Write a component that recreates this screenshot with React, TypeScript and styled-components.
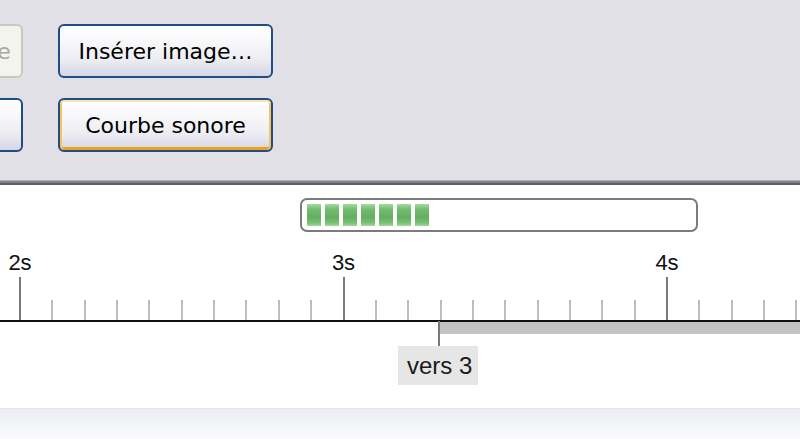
import React from "react";
import styled, { createGlobalStyle, css } from "styled-components";

const Global = createGlobalStyle`
  html, body { margin: 0; padding: 0; background: #ffffff; overflow: hidden; }
  #root { width: 800px; height: 439px; }
`;

const Page = styled.div`
  width: 800px;
  height: 439px;
  display: flex;
  flex-direction: column;
  overflow: hidden;
  background: #ffffff;
`;

const Toolbar = styled.div`
  height: 180px;
  flex: none;
  background: #e0e0e6;
  box-sizing: border-box;
  padding-top: 24px;
  overflow: hidden;
`;

const ButtonGrid = styled.div`
  display: grid;
  grid-template-columns: 215px 215px;
  grid-auto-rows: 54px;
  column-gap: 35px;
  row-gap: 20px;
  margin-left: -192px;
`;

type Variant = "disabled" | "normal" | "hot";

const Button = styled.button<{ $variant: Variant }>`
  box-sizing: border-box;
  height: 54px;
  width: 215px;
  margin: 0;
  padding: 0 4px;
  border-radius: 6px;
  font-family: "DejaVu Sans", Verdana, sans-serif;
  font-size: 22px;
  white-space: nowrap;
  overflow: hidden;
  text-align: center;
  ${(p) =>
    p.$variant === "disabled"
      ? css`
          border: 2px solid #cbc9bd;
          background: #f4f4ef;
          color: #aca899;
        `
      : css`
          border: 2px solid #1e4e84;
          color: #000000;
          background: linear-gradient(
            180deg,
            #ffffff 0%,
            #f7f7fa 35%,
            #ebebf2 70%,
            #d6d5e5 100%
          );
        `}
  ${(p) =>
    p.$variant === "hot" &&
    css`
      box-shadow: inset 0 2px 0 #fde6ad, inset 2px 0 0 #f8c35a,
        inset -2px 0 0 #f8c35a, inset 0 -3px 0 #eea11c;
    `}
`;

const Separator = styled.div`
  height: 5px;
  flex: none;
  background: linear-gradient(
    180deg,
    #b4b4b8 0px,
    #b4b4b8 1px,
    #828284 1px,
    #828284 3px,
    #5f5f60 3px,
    #5f5f60 5px
  );
`;

const Timeline = styled.div`
  flex: none;
  height: 223px;
  display: flex;
  flex-direction: column;
`;

const Progress = styled.div`
  box-sizing: border-box;
  margin: 13px 0 0 300px;
  width: 398px;
  height: 34px;
  border: 2px solid #7b7b7b;
  border-radius: 7px;
  background: #ffffff;
  padding: 4px 5px;
  display: flex;
  gap: 4px;
`;

const Block = styled.div`
  width: 14px;
  height: 22px;
  background: linear-gradient(
    180deg,
    #a6d9a2 0%,
    #73bb6f 25%,
    #62b05e 60%,
    #79bf74 85%,
    #a2d69e 100%
  );
`;

const Ruler = styled.div`
  position: relative;
  height: 176px;
`;

const RulerSvg = styled.svg`
  display: block;
  width: 800px;
  height: 176px;
`;

const TimeLabel = styled.span`
  position: absolute;
  top: 18px;
  transform: translateX(-50%);
  font-family: "Liberation Sans", Arial, sans-serif;
  font-size: 22px;
  line-height: 26px;
  color: #111111;
`;

const Tag = styled.div`
  position: absolute;
  left: 398px;
  top: 114px;
  width: 80px;
  height: 39px;
  box-sizing: border-box;
  padding-left: 9px;
  background: #e6e6e6;
  display: flex;
  align-items: center;
  font-family: "Liberation Sans", Arial, sans-serif;
  font-size: 24px;
  color: #1a1a1a;
`;

const BottomBand = styled.div`
  flex: 1;
  border-top: 1px solid #e2e5ee;
  background: linear-gradient(180deg, #eaedf3 0%, #f5f6f9 60%, #fafafc 100%);
`;

const SECOND = 323.5;
const ORIGIN = 20;

const ticks = Array.from({ length: 26 }, (_, i) => ({
  x: ORIGIN + (SECOND / 10) * i,
  major: i % 10 === 0,
}));

const labels = [
  { x: ORIGIN, text: "2s" },
  { x: ORIGIN + SECOND, text: "3s" },
  { x: ORIGIN + SECOND * 2, text: "4s" },
];

export default function App() {
  return (
    <Page>
      <Global />
      <Toolbar>
        <ButtonGrid>
          <Button $variant="disabled" disabled>
            Supprimer image
          </Button>
          <Button $variant="normal">Insérer image…</Button>
          <Button $variant="normal">Insérer texte</Button>
          <Button $variant="hot">Courbe sonore</Button>
        </ButtonGrid>
      </Toolbar>
      <Separator />
      <Timeline>
        <Progress>
          {Array.from({ length: 7 }, (_, i) => (
            <Block key={i} />
          ))}
        </Progress>
        <Ruler>
          <RulerSvg viewBox="0 0 800 176">
            <rect x={439} y={90} width={361} height={12} fill="#c3c3c3" />
            {ticks.map((t, i) => (
              <rect
                key={i}
                x={Math.round(t.x) - 1}
                y={t.major ? 45 : 68}
                width={2}
                height={t.major ? 44 : 21}
                fill={t.major ? "#7a7a7a" : "#bdbdbd"}
              />
            ))}
            <rect x={0} y={88} width={800} height={2} fill="#111111" />
            <rect x={438} y={89} width={2} height={25} fill="#7a7a7a" />
          </RulerSvg>
          {labels.map((l) => (
            <TimeLabel key={l.text} style={{ left: l.x }}>
              {l.text}
            </TimeLabel>
          ))}
          <Tag>vers 3</Tag>
        </Ruler>
      </Timeline>
      <BottomBand />
    </Page>
  );
}
